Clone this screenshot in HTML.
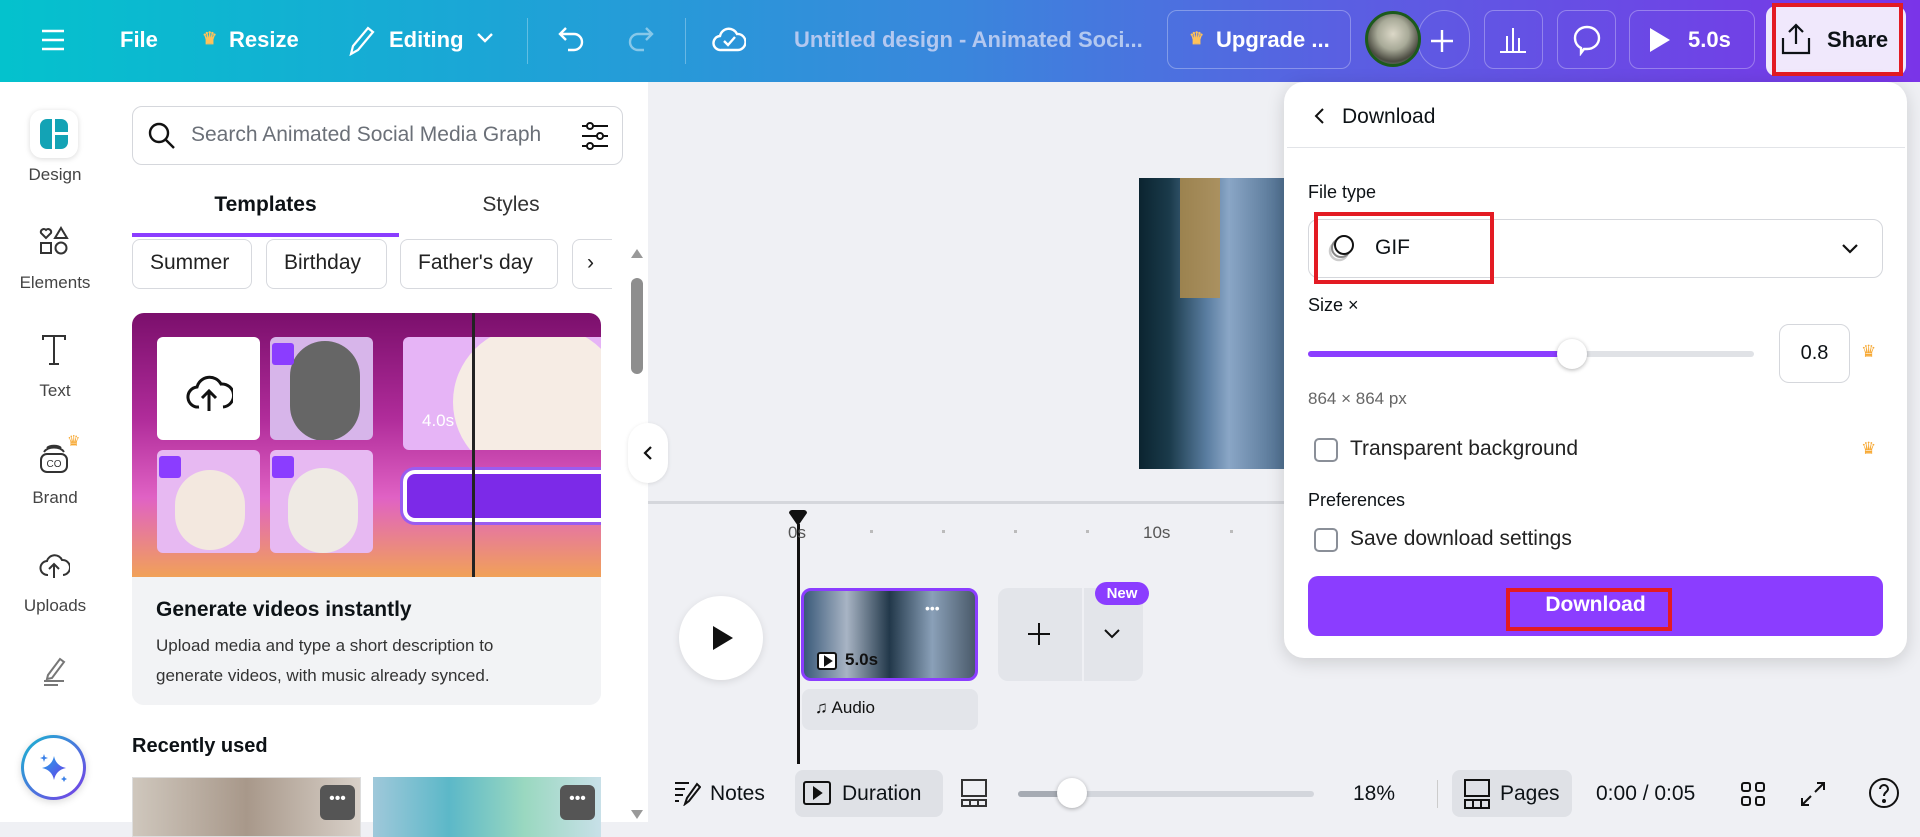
<!DOCTYPE html>
<html><head><meta charset="utf-8"><style>
*{box-sizing:border-box;margin:0;padding:0}
body{width:1920px;height:822px;overflow:hidden;font-family:"Liberation Sans",sans-serif;background:#eff0f4;position:relative;color:#0d1216}
.a{position:absolute}
.hdr{left:0;top:0;width:1920px;height:82px;background:linear-gradient(90deg,#04c2cd 0%,#1ba6d6 25%,#3a86dc 50%,#5a5fe2 70%,#7a34e8 100%)}
.ht{color:#fff;font-size:22px;font-weight:bold;top:27px}
.hb{border:1px solid rgba(255,255,255,.3);border-radius:10px;top:10px;height:59px}
svg{display:block}
.lbl{font-size:17px;color:#444;width:110px;text-align:center;left:0}
.chip{top:239px;height:50px;border:1px solid #d7d9de;border-radius:8px;font-size:21px;padding:11px 17px;color:#222;background:#fff}
.cb{width:24px;height:24px;border:2px solid #8a8f98;border-radius:5px}
</style></head><body>
<div class="a hdr"></div>
<svg class="a" style="left:40px;top:27px" width="26" height="26" viewBox="0 0 26 26" stroke="#fff" stroke-width="2.4"><path d="M2 4h22M2 13h22M2 22h22"/></svg>
<div class="a ht" style="left:120px">File</div>
<div class="a ht" style="left:202px;color:#ffc25a;font-size:17px;top:29px">♛</div>
<div class="a ht" style="left:229px">Resize</div>
<svg class="a" style="left:346px;top:24px" width="30" height="32" viewBox="0 0 30 32" fill="none" stroke="#fff" stroke-width="2.2"><path d="M5 30l2-8L22 4l5 4-15 18z"/></svg>
<div class="a ht" style="left:389px">Editing</div>
<svg class="a" style="left:476px;top:32px" width="18" height="12" viewBox="0 0 18 12" fill="none" stroke="#fff" stroke-width="2.4"><path d="M2 2l7 7 7-7"/></svg>
<div class="a" style="left:527px;top:18px;width:1px;height:46px;background:rgba(255,255,255,.3)"></div>
<svg class="a" style="left:556px;top:24px" width="30" height="30" viewBox="0 0 30 30" fill="none" stroke="#fff" stroke-width="2.4"><path d="M10 4L4 10l6 6M4 10h14a8 8 0 010 16h-6"/></svg>
<svg class="a" style="left:626px;top:24px" width="30" height="30" viewBox="0 0 30 30" fill="none" stroke="rgba(255,255,255,.45)" stroke-width="2.4"><path d="M20 4l6 6-6 6M26 10H12a8 8 0 000 16h6"/></svg>
<div class="a" style="left:685px;top:18px;width:1px;height:46px;background:rgba(255,255,255,.3)"></div>
<svg class="a" style="left:712px;top:22px" width="34" height="32" viewBox="0 0 34 32" fill="none" stroke="#fff" stroke-width="2.4"><path d="M9 28a7 7 0 01-1-14 9 9 0 0117-2 7 7 0 011 16z"/><path d="M12 19l4 4 7-8"/></svg>
<div class="a ht" style="left:794px;color:#b3c8f0;font-weight:bold">Untitled design - Animated Soci...</div>
<div class="a hb" style="left:1167px;width:184px"></div>
<div class="a ht" style="left:1189px;color:#ffc25a;font-size:17px;top:29px">♛</div>
<div class="a ht" style="left:1216px">Upgrade ...</div>
<div class="a hb" style="left:1418px;width:52px;border-radius:26px"></div>
<svg class="a" style="left:1429px;top:28px" width="26" height="26" viewBox="0 0 26 26" stroke="#fff" stroke-width="2.4"><path d="M13 2v22M2 13h22"/></svg>
<div class="a" style="left:1365px;top:11px;width:56px;height:56px;border-radius:50%;border:3px solid #1c5a1c;background:radial-gradient(circle at 50% 40%,#dcd8c8 0%,#a8aa98 40%,#4a4a40 70%,#8ab09c 100%)"></div>
<div class="a hb" style="left:1484px;width:59px"></div>
<svg class="a" style="left:1498px;top:24px" width="30" height="30" viewBox="0 0 30 30" stroke="#fff" stroke-width="2"><path d="M2 28h26M9 28V12M15 28V4M21 28V14"/></svg>
<div class="a hb" style="left:1557px;width:59px"></div>
<svg class="a" style="left:1571px;top:24px" width="32" height="32" viewBox="0 0 32 32" fill="none" stroke="#fff" stroke-width="2.4"><path d="M16 3c7 0 12 5 12 11s-5 11-12 11c-1 0-2 0-3 0l-3 4v-5C6 22 4 18 4 14 4 8 9 3 16 3z"/></svg>
<div class="a hb" style="left:1629px;width:126px"></div>
<svg class="a" style="left:1648px;top:26px" width="24" height="28" viewBox="0 0 24 28"><path d="M2 2l20 12L2 26z" fill="#fff"/></svg>
<div class="a ht" style="left:1688px">5.0s</div>
<div class="a" style="left:1766px;top:6px;width:140px;height:70px;border-radius:10px;background:#f0e8fc"></div>
<div class="a" style="left:1772px;top:3px;width:131px;height:73px;border:4px solid #e31b23"></div>
<svg class="a" style="left:1780px;top:22px" width="32" height="34" viewBox="0 0 32 34" fill="none" stroke="#0d1216" stroke-width="2.2"><path d="M16 22V3M9 10l7-7 7 7M3 16v15h26V16"/></svg>
<div class="a ht" style="left:1827px;color:#0d1216">Share</div>

<div class="a" style="left:0;top:82px;width:110px;height:740px;background:#fff"></div>
<div class="a" style="left:30px;top:110px;width:48px;height:48px;border-radius:12px;background:#fff;box-shadow:0 1px 6px rgba(0,0,0,.15)"></div>
<div class="a" style="left:40px;top:119px;width:28px;height:30px;border-radius:7px;background:#13a3b5"></div>
<div class="a" style="left:52px;top:119px;width:3px;height:30px;background:#fff"></div>
<div class="a" style="left:55px;top:132px;width:13px;height:3px;background:#fff"></div>
<div class="a lbl" style="top:165px">Design</div>
<svg class="a" style="left:39px;top:226px" width="30" height="30" viewBox="0 0 30 30" fill="none" stroke="#333" stroke-width="2"><path d="M7 12L2 7a3 3 0 015-3 3 3 0 015 3z"/><path d="M22 2l6 10H16z"/><rect x="2" y="17" width="10" height="10"/><circle cx="22" cy="22" r="5.5"/></svg>
<div class="a lbl" style="top:273px">Elements</div>
<svg class="a" style="left:41px;top:334px" width="26" height="32" viewBox="0 0 26 32" fill="none" stroke="#333" stroke-width="2"><path d="M2 6V2h22v4M13 2v28M8 30h10"/></svg>
<div class="a lbl" style="top:381px">Text</div>
<svg class="a" style="left:38px;top:442px" width="32" height="32" viewBox="0 0 32 32" fill="none" stroke="#333" stroke-width="2"><rect x="3" y="12" width="26" height="18" rx="6"/><path d="M6 10c4-6 16-6 20 0M9 6c3-3 11-3 14 0"/><text x="16" y="25" font-size="10" text-anchor="middle" fill="#333" stroke="none" font-family="Liberation Sans">CO</text></svg>
<div class="a" style="left:67px;top:432px;color:#f7a934;font-size:15px">♛</div>
<div class="a lbl" style="top:488px">Brand</div>
<svg class="a" style="left:38px;top:548px" width="32" height="32" viewBox="0 0 32 32" fill="none" stroke="#333" stroke-width="2"><path d="M10 27a7 7 0 01-1-14 8 8 0 0115-1 7 7 0 011 15"/><path d="M16 30V16M11 21l5-5 5 5"/></svg>
<div class="a lbl" style="top:596px">Uploads</div>
<svg class="a" style="left:40px;top:655px" width="28" height="32" viewBox="0 0 28 32" fill="none" stroke="#777" stroke-width="2"><path d="M8 20L20 4l4 3L12 23l-5 1zM4 26h20M4 30h14"/></svg>
<div class="a" style="left:21px;top:735px;width:65px;height:65px;border-radius:50%;background:linear-gradient(#fff,#fff) padding-box,linear-gradient(135deg,#16b8d0,#7a3ae8) border-box;border:3px solid transparent;box-shadow:0 2px 8px rgba(0,0,0,.15)"></div>
<svg class="a" style="left:38px;top:752px" width="32" height="32" viewBox="0 0 32 32"><defs><linearGradient id="g" x1="0" y1="0" x2="1" y2="1"><stop offset="0" stop-color="#22a6e8"/><stop offset="1" stop-color="#6a3be8"/></linearGradient></defs><path d="M16 4Q18 14 28 16Q18 18 16 28Q14 18 4 16Q14 14 16 4z" fill="url(#g)"/><path d="M6 2l1 3 3 1-3 1-1 3-1-3-3-1 3-1z M26 24l1 2 2 1-2 1-1 2-1-2-2-1 2-1z" fill="#3a80e8"/></svg>

<div class="a" style="left:110px;top:82px;width:538px;height:740px;background:#fff"></div>
<div class="a" style="left:132px;top:106px;width:491px;height:59px;border:1px solid #d5d7dc;border-radius:10px"></div>
<svg class="a" style="left:147px;top:121px" width="30" height="30" viewBox="0 0 30 30" fill="none" stroke="#111" stroke-width="2.4"><circle cx="12" cy="12" r="9"/><path d="M19 19l8 8"/></svg>
<div class="a" style="left:191px;top:123px;font-size:21px;color:#6b7078">Search Animated Social Media Graph</div>
<svg class="a" style="left:580px;top:121px" width="30" height="30" viewBox="0 0 30 30" fill="none" stroke="#111" stroke-width="2"><path d="M2 5h26M2 15h26M2 25h26"/><circle cx="10" cy="5" r="3" fill="#fff"/><circle cx="20" cy="15" r="3" fill="#fff"/><circle cx="10" cy="25" r="3" fill="#fff"/></svg>
<div class="a" style="left:132px;top:193px;width:267px;text-align:center;font-size:21px;font-weight:bold">Templates</div>
<div class="a" style="left:399px;top:193px;width:224px;text-align:center;font-size:21px;color:#333">Styles</div>
<div class="a" style="left:132px;top:233px;width:267px;height:4px;background:#8b3dff"></div>
<div class="a chip" style="left:132px;width:120px">Summer</div>
<div class="a chip" style="left:266px;width:121px">Birthday</div>
<div class="a chip" style="left:400px;width:158px">Father's day</div>
<div class="a chip" style="left:572px;width:40px;border-right:none;border-radius:8px 0 0 8px;padding:11px 14px">›</div>
<div class="a" style="left:612px;top:235px;width:22px;height:60px;background:#fff"></div>
<div class="a" style="left:631px;top:249px;width:0;height:0;border-left:6px solid transparent;border-right:6px solid transparent;border-bottom:9px solid #999"></div>
<div class="a" style="left:631px;top:278px;width:12px;height:96px;border-radius:6px;background:#8e8e8e"></div>
<div class="a" style="left:631px;top:810px;width:0;height:0;border-left:6px solid transparent;border-right:6px solid transparent;border-top:9px solid #999"></div>
<div class="a" style="left:132px;top:313px;width:469px;height:392px;border-radius:12px;background:#f2f3f5;overflow:hidden">
 <div class="a" style="left:0;top:0;width:469px;height:264px;background:linear-gradient(180deg,#7b0f6c 0%,#b02c9a 40%,#e062c4 70%,#f1a158 100%)"></div>
 <div class="a" style="left:25px;top:24px;width:103px;height:103px;background:#fff;border-radius:6px"></div>
 <svg class="a" style="left:53px;top:56px" width="48" height="44" viewBox="0 0 48 44" fill="none" stroke="#111" stroke-width="3"><path d="M14 38a10 10 0 01-2-20 13 13 0 0124-3 11 11 0 012 23"/><path d="M24 42V22M17 29l7-7 7 7"/></svg>
 <div class="a" style="left:138px;top:24px;width:103px;height:103px;background:#d7b5ea;border-radius:6px;overflow:hidden"><div class="a" style="left:20px;top:4px;width:70px;height:100px;border-radius:35px;background:#666"></div></div>
 <div class="a" style="left:25px;top:137px;width:103px;height:103px;background:#e7b9f2;border-radius:6px;overflow:hidden"><div class="a" style="left:18px;top:20px;width:70px;height:80px;border-radius:35px;background:#f3e8df"></div></div>
 <div class="a" style="left:138px;top:137px;width:103px;height:103px;background:#e7b9f2;border-radius:6px;overflow:hidden"><div class="a" style="left:18px;top:18px;width:70px;height:85px;border-radius:35px;background:#efeae4"></div></div>
 <div class="a" style="left:140px;top:30px;width:22px;height:22px;background:#8b3dff;border-radius:3px"></div>
 <div class="a" style="left:27px;top:143px;width:22px;height:22px;background:#8b3dff;border-radius:3px"></div>
 <div class="a" style="left:140px;top:143px;width:22px;height:22px;background:#8b3dff;border-radius:3px"></div>
 <div class="a" style="left:271px;top:24px;width:198px;height:113px;background:#e6b4f6;border-radius:6px 0 0 6px;overflow:hidden"><div class="a" style="left:50px;top:-10px;width:170px;height:150px;border-radius:80px;background:#f6ece4"></div></div>
 <div class="a" style="left:290px;top:98px;color:#fff;font-size:17px">4.0s</div>
 <div class="a" style="left:271px;top:157px;width:198px;height:52px;background:#7c2ae8;border:4px solid #fff;border-right:none;border-radius:12px 0 0 12px;box-shadow:0 0 0 3px #9a5cf0"></div>
 <div class="a" style="left:340px;top:0;width:3px;height:264px;background:#222"></div>
 <div class="a" style="left:0;top:264px;width:469px;height:128px;background:#f2f3f5"></div>
 <div class="a" style="left:24px;top:285px;font-size:21px;font-weight:bold">Generate videos instantly</div>
 <div class="a" style="left:24px;top:318px;font-size:17px;line-height:30px;color:#333">Upload media and type a short description to<br>generate videos, with music already synced.</div>
</div>
<div class="a" style="left:132px;top:735px;font-size:20px;font-weight:bold">Recently used</div>
<div class="a" style="left:132px;top:777px;width:229px;height:60px;background:linear-gradient(90deg,#cfc7bd,#a8988a,#d8d0c8);border:1px solid #ddd"></div>
<div class="a" style="left:373px;top:777px;width:228px;height:60px;background:linear-gradient(90deg,#9fc8da,#5cb8c8,#9ad8c0,#c8e0e8)"></div>
<div class="a" style="left:320px;top:785px;width:35px;height:35px;border-radius:6px;background:#555;color:#fff;text-align:center;font-size:16px;line-height:28px">•••</div>
<div class="a" style="left:560px;top:785px;width:35px;height:35px;border-radius:6px;background:#555;color:#fff;text-align:center;font-size:16px;line-height:28px">•••</div>

<div class="a" style="left:628px;top:423px;width:40px;height:60px;border-radius:20px;background:#fff;box-shadow:0 1px 4px rgba(0,0,0,.1)"></div>
<svg class="a" style="left:642px;top:445px" width="12" height="16" viewBox="0 0 12 16" fill="none" stroke="#111" stroke-width="2.2"><path d="M9 2L3 8l6 6"/></svg>

<div class="a" style="left:1139px;top:178px;width:150px;height:291px;background:linear-gradient(90deg,#0b2430 0%,#1a3a4a 20%,#5a7da0 45%,#8aa6c6 60%,#4a6a8a 100%)"></div>
<div class="a" style="left:1180px;top:178px;width:40px;height:120px;background:#b8904a;opacity:.8"></div>
<div class="a" style="left:648px;top:501px;width:636px;height:3px;background:#d5d7dc"></div>
<svg class="a" style="left:788px;top:510px" width="20" height="16" viewBox="0 0 20 16"><path d="M1 3a3 3 0 013-3h12a3 3 0 013 3L10 16z" fill="#111"/></svg>
<div class="a" style="left:797px;top:524px;width:3px;height:240px;background:#111"></div>
<div class="a" style="left:788px;top:523px;font-size:17px;color:#555">0s</div>
<div class="a" style="left:870px;top:530px;width:3px;height:3px;background:#bbb"></div>
<div class="a" style="left:942px;top:530px;width:3px;height:3px;background:#bbb"></div>
<div class="a" style="left:1014px;top:530px;width:3px;height:3px;background:#bbb"></div>
<div class="a" style="left:1086px;top:530px;width:3px;height:3px;background:#bbb"></div>
<div class="a" style="left:1230px;top:530px;width:3px;height:3px;background:#bbb"></div>
<div class="a" style="left:1143px;top:523px;font-size:17px;color:#555">10s</div>
<div class="a" style="left:679px;top:596px;width:84px;height:84px;border-radius:50%;background:#fff;box-shadow:0 2px 8px rgba(0,0,0,.1)"></div>
<svg class="a" style="left:711px;top:624px" width="24" height="28" viewBox="0 0 24 28"><path d="M2 2l20 12L2 26z" fill="#111"/></svg>
<div class="a" style="left:801px;top:588px;width:177px;height:93px;border:3px solid #8b3dff;border-radius:10px;background:linear-gradient(90deg,#3a5a7a,#a8b4c4 25%,#22384a 50%,#8aa0b8 75%,#4a5a6a);overflow:hidden"></div>
<div class="a" style="left:925px;top:600px;color:#fff;font-size:14px">•••</div>
<svg class="a" style="left:817px;top:652px" width="20" height="18" viewBox="0 0 20 18" fill="none" stroke="#111" stroke-width="2"><rect x="1" y="1" width="18" height="16" rx="2" fill="#fff"/><path d="M8 5v8l6-4z" fill="#111"/></svg>
<div class="a" style="left:845px;top:650px;font-size:17px;font-weight:bold;color:#111">5.0s</div>
<div class="a" style="left:802px;top:689px;width:176px;height:41px;border-radius:8px;background:#e3e5ea"></div>
<div class="a" style="left:815px;top:698px;font-size:17px;color:#111">♫ Audio</div>
<div class="a" style="left:998px;top:588px;width:145px;height:93px;border-radius:10px;background:#e3e5ea"></div>
<div class="a" style="left:1082px;top:588px;width:2px;height:93px;background:#eff0f4"></div>
<svg class="a" style="left:1027px;top:622px" width="24" height="24" viewBox="0 0 24 24" stroke="#111" stroke-width="2"><path d="M12 1v22M1 12h22"/></svg>
<svg class="a" style="left:1104px;top:629px" width="16" height="10" viewBox="0 0 16 10" fill="none" stroke="#111" stroke-width="2"><path d="M1 1l7 7 7-7"/></svg>
<div class="a" style="left:1095px;top:582px;width:54px;height:23px;border-radius:12px;background:#8b3dff;color:#fff;font-size:15px;font-weight:bold;text-align:center;line-height:23px">New</div>

<svg class="a" style="left:673px;top:780px" width="28" height="26" viewBox="0 0 28 26" fill="none" stroke="#111" stroke-width="2"><path d="M2 3h14M2 9h10M2 15h8M2 21h4M12 24l2-6L24 4l3 3-11 14z"/></svg>
<div class="a" style="left:710px;top:782px;font-size:21px">Notes</div>
<div class="a" style="left:795px;top:770px;width:148px;height:47px;border-radius:8px;background:#dfe1e6"></div>
<svg class="a" style="left:803px;top:781px" width="28" height="24" viewBox="0 0 28 24" fill="none" stroke="#111" stroke-width="2"><rect x="1" y="1" width="26" height="22" rx="2"/><path d="M11 7v10l7-5z" fill="#111"/></svg>
<div class="a" style="left:842px;top:782px;font-size:21px">Duration</div>
<svg class="a" style="left:960px;top:778px" width="28" height="30" viewBox="0 0 28 30" fill="none" stroke="#333" stroke-width="2"><rect x="2" y="2" width="24" height="16"/><path d="M2 22h24v6H2zM10 22v6M18 22v6"/></svg>
<div class="a" style="left:1018px;top:791px;width:296px;height:6px;border-radius:3px;background:#d3d6dc"></div>
<div class="a" style="left:1018px;top:791px;width:54px;height:6px;border-radius:3px;background:#a6abb3"></div>
<div class="a" style="left:1057px;top:778px;width:30px;height:30px;border-radius:50%;background:#fff;box-shadow:0 1px 4px rgba(0,0,0,.3)"></div>
<div class="a" style="left:1353px;top:782px;font-size:21px">18%</div>
<div class="a" style="left:1437px;top:780px;width:1px;height:28px;background:#ccc"></div>
<div class="a" style="left:1452px;top:770px;width:120px;height:47px;border-radius:8px;background:#dfe1e6"></div>
<svg class="a" style="left:1463px;top:778px" width="28" height="32" viewBox="0 0 28 32" fill="none" stroke="#111" stroke-width="2"><rect x="2" y="2" width="24" height="16"/><path d="M2 22h24v8H2zM10 22v8M18 22v8"/></svg>
<div class="a" style="left:1500px;top:782px;font-size:21px">Pages</div>
<div class="a" style="left:1596px;top:782px;font-size:21px">0:00 / 0:05</div>
<svg class="a" style="left:1740px;top:781px" width="26" height="26" viewBox="0 0 26 26" fill="none" stroke="#111" stroke-width="2"><rect x="2" y="2" width="8" height="8" rx="2"/><rect x="16" y="2" width="8" height="8" rx="2"/><rect x="2" y="16" width="8" height="8" rx="2"/><rect x="16" y="16" width="8" height="8" rx="2"/></svg>
<svg class="a" style="left:1800px;top:781px" width="26" height="26" viewBox="0 0 26 26" fill="none" stroke="#111" stroke-width="2"><path d="M15 11l9-9M17 2h7v7M11 15l-9 9M2 17v7h7"/></svg>
<svg class="a" style="left:1868px;top:777px" width="32" height="32" viewBox="0 0 32 32" fill="none" stroke="#111" stroke-width="2"><circle cx="16" cy="16" r="14"/><path d="M12 12a4 4 0 118 0c0 3-4 3-4 7"/><circle cx="16" cy="24" r="1" fill="#111"/></svg>

<div class="a" style="left:1284px;top:82px;width:623px;height:576px;background:#fff;border-radius:20px;box-shadow:0 4px 18px rgba(0,0,0,.15)"></div>
<svg class="a" style="left:1313px;top:107px" width="12" height="18" viewBox="0 0 12 18" fill="none" stroke="#111" stroke-width="2"><path d="M10 2L3 9l7 7"/></svg>
<div class="a" style="left:1342px;top:105px;font-size:21px">Download</div>
<div class="a" style="left:1287px;top:147px;width:618px;height:1px;background:#e2e4e8"></div>
<div class="a" style="left:1308px;top:182px;font-size:18px">File type</div>
<div class="a" style="left:1308px;top:219px;width:575px;height:59px;border:1px solid #d5d7dc;border-radius:10px"></div>
<svg class="a" style="left:1328px;top:232px" width="32" height="32" viewBox="0 0 32 32" fill="none"><circle cx="11" cy="19" r="9" stroke="#ccc" stroke-width="2.5"/><circle cx="13" cy="16" r="9" stroke="#888" stroke-width="2"/><circle cx="16" cy="13" r="9" stroke="#111" stroke-width="2" fill="#fff"/></svg>
<div class="a" style="left:1375px;top:236px;font-size:21px">GIF</div>
<svg class="a" style="left:1841px;top:243px" width="18" height="12" viewBox="0 0 18 12" fill="none" stroke="#111" stroke-width="2.2"><path d="M2 2l7 7 7-7"/></svg>
<div class="a" style="left:1314px;top:212px;width:180px;height:72px;border:4px solid #e31b23"></div>
<div class="a" style="left:1308px;top:295px;font-size:18px">Size ×</div>
<div class="a" style="left:1308px;top:351px;width:446px;height:6px;border-radius:3px;background:#e0e2e6"></div>
<div class="a" style="left:1308px;top:351px;width:264px;height:6px;border-radius:3px;background:#8b3dff"></div>
<div class="a" style="left:1557px;top:339px;width:30px;height:30px;border-radius:50%;background:#fff;box-shadow:0 1px 4px rgba(0,0,0,.3)"></div>
<div class="a" style="left:1779px;top:324px;width:71px;height:59px;border:1px solid #d5d7dc;border-radius:10px;font-size:20px;text-align:center;line-height:57px">0.8</div>
<div class="a" style="left:1861px;top:342px;color:#f7a934;font-size:17px">♛</div>
<div class="a" style="left:1308px;top:389px;font-size:17px;color:#666">864 × 864 px</div>
<div class="a cb" style="left:1314px;top:438px"></div>
<div class="a" style="left:1350px;top:437px;font-size:21px;color:#222">Transparent background</div>
<div class="a" style="left:1861px;top:439px;color:#f7a934;font-size:17px">♛</div>
<div class="a" style="left:1308px;top:490px;font-size:18px">Preferences</div>
<div class="a cb" style="left:1314px;top:528px"></div>
<div class="a" style="left:1350px;top:527px;font-size:21px;color:#222">Save download settings</div>
<div class="a" style="left:1308px;top:576px;width:575px;height:60px;border-radius:10px;background:#8b3dff"></div>
<div class="a" style="left:1506px;top:588px;width:166px;height:43px;border:4px solid #e31b23"></div>
<div class="a" style="left:1308px;top:593px;width:575px;text-align:center;font-size:21px;font-weight:bold;color:#fff">Download</div>
</body></html>
